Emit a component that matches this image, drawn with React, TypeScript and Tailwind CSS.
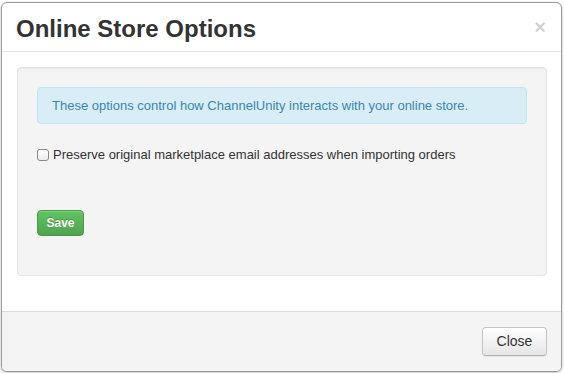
export default function App() {
  return (
    <div className="w-[564px] h-[373px] bg-white pt-[2px] pl-px font-['Liberation_Sans',Arial,sans-serif]">
      <div className="w-[561px] h-[370px] flex flex-col rounded-[6px] border border-[#9a9a9a] bg-white shadow-[0_1px_3px_rgba(0,0,0,0.25)] overflow-hidden">
        <div className="h-[49px] shrink-0 flex items-center justify-between border-b border-[#e5e5e5] pl-[14px] pr-[15px]">
          <h3 className="text-[24px] leading-none font-bold text-[#333] pt-[4px]">Online Store Options</h3>
          <span className="text-[20px] leading-none font-bold text-black/20 -mt-[1px]">×</span>
        </div>

        <div className="h-[259px] shrink-0 px-[15px] pt-[15px]">
          <div className="h-[209px] w-[530px] rounded-[4px] border border-[#e3e3e3] bg-[#f4f4f4] shadow-[inset_0_1px_1px_rgba(0,0,0,0.05)] px-[19px] pt-[19px]">
            <div className="h-[37px] flex items-center rounded-[4px] border border-[#bce8f1] bg-[#d9edf7] px-[14px] text-[13px] text-[#3a87ad]">
              These options control how ChannelUnity interacts with your online store.
            </div>

            <label className="mt-[23px] h-[16px] flex items-center gap-[4px] text-[13px] text-[#333]">
              <span className="w-[12px] h-[12px] rounded-[3px] border border-[#8a8a8a] bg-gradient-to-b from-white to-[#ececec]" />
              Preserve original marketplace email addresses when importing orders
            </label>

            <button className="mt-[47px] w-[47px] h-[26px] rounded-[4px] border border-[#4a9a4a] bg-gradient-to-b from-[#62c462] to-[#51a351] text-[12px] font-bold text-white [text-shadow:0_-1px_0_rgba(0,0,0,0.25)] shadow-[inset_0_1px_0_rgba(255,255,255,0.2)]">
              Save
            </button>
          </div>
        </div>

        <div className="flex-1 flex items-center justify-end border-t border-[#dddddd] bg-[#f4f4f4] pr-[14px] pb-[1px]">
          <button className="w-[65px] h-[29px] rounded-[4px] border border-[#c5c5c5] border-b-[#b0b0b0] bg-gradient-to-b from-white to-[#e6e6e6] text-[14px] text-[#333] shadow-[inset_0_1px_0_rgba(255,255,255,0.2),0_1px_2px_rgba(0,0,0,0.05)]">
            Close
          </button>
        </div>
      </div>
    </div>
  );
}
